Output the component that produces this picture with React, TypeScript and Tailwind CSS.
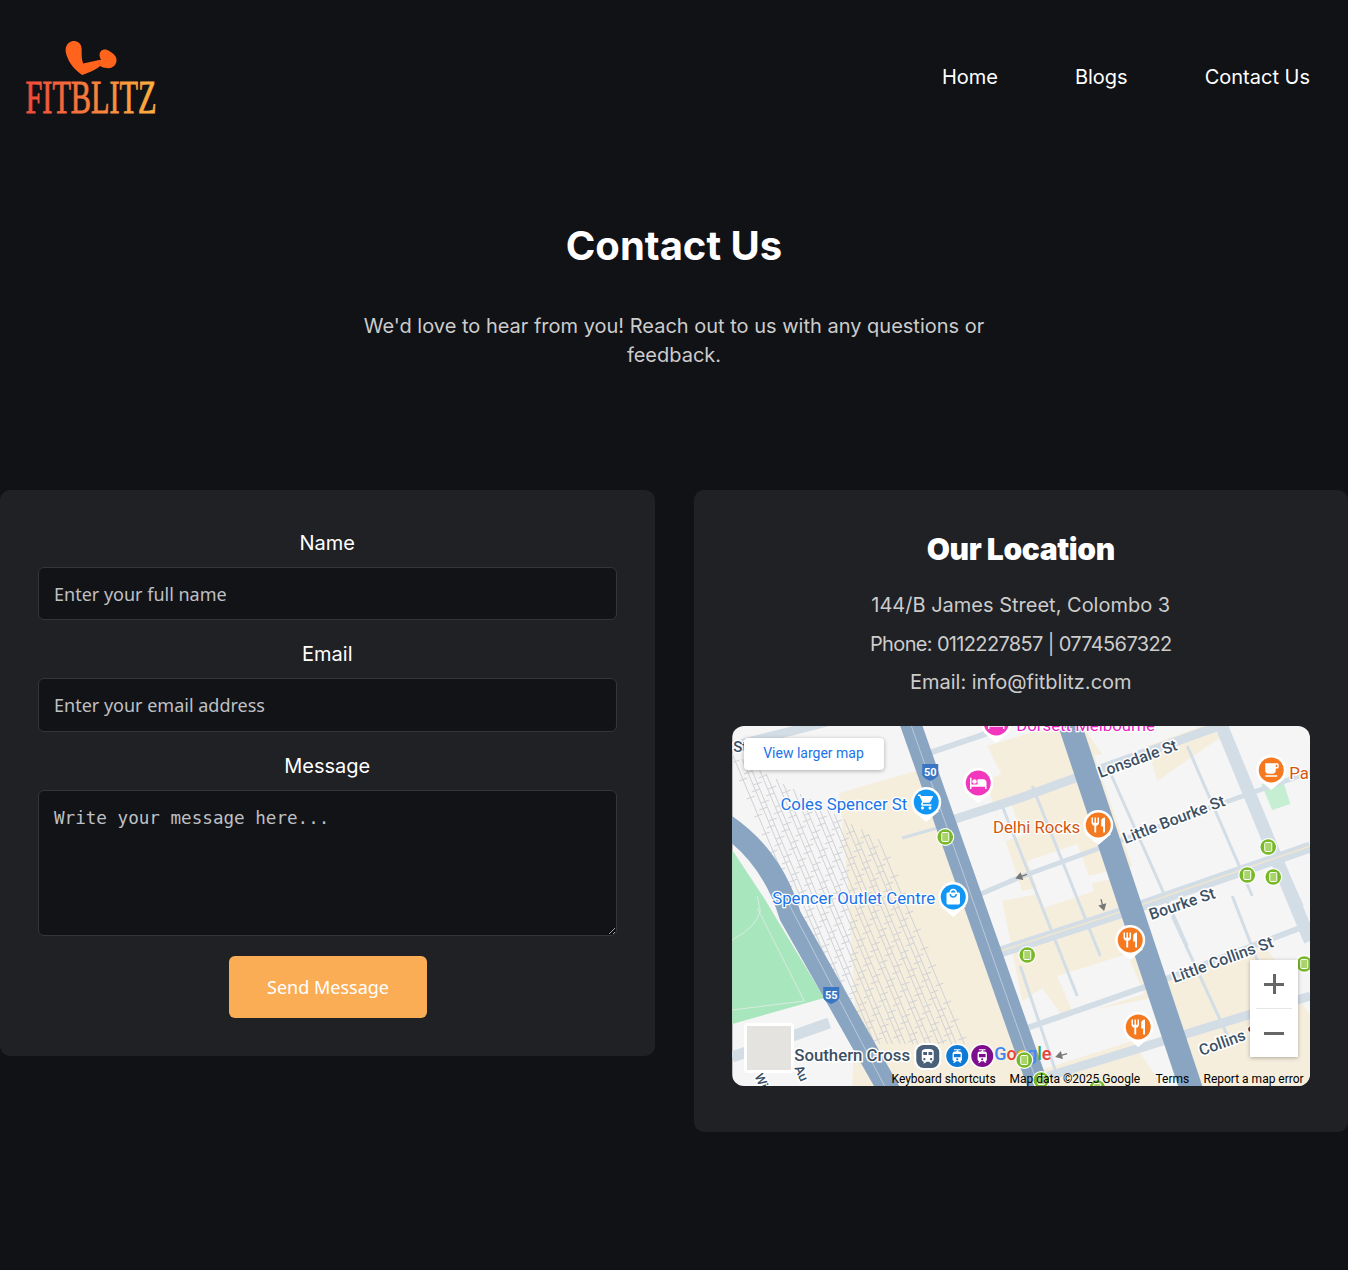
import { MdHotel, MdLocalCafe, MdLocalGroceryStore, MdLocalMall, MdRestaurant, MdTram, MdTrain } from 'react-icons/md';
import type { IconType } from 'react-icons';

const Logo = () => (
    <svg width="132" height="74" viewBox="0 0 132 74" className="overflow-visible">
        <defs>
            <linearGradient id="logoText" gradientUnits="userSpaceOnUse" x1="0" x2="131" y1="0" y2="0">
                <stop offset="0" stopColor="#f04a3a" />
                <stop offset="1" stopColor="#fdb23f" />
            </linearGradient>
        </defs>
        <path
            d="M39.7 7 C41 2 45 -0.5 49 0 C53 1 55 3 55.5 7 C56 12 55 17 57.3 22.5 L73 19 L75 19 C73 15 73 12 75 10 C77 8 81 8 83 10 C87 12 91 15 90.5 20 C90 25 85 28 81 27 C78 27 76 26 74 25 C70 29 62 32 56 34 C52 31 47 27 43 20 C41 16 39 11 39.7 7 Z"
            fill="#ff631c"
        />
        <text
            x="-0.5"
            y="72"
            fontSize="47"
            textLength="131"
            lengthAdjust="spacingAndGlyphs"
            fill="url(#logoText)"
            stroke="url(#logoText)"
            strokeWidth="0.9"
            className="font-['Liberation_Serif']"
        >
            FITBLITZ
        </text>
    </svg>
);

const Pin = ({ x, y, color, Icon, size = 18 }: { x: number; y: number; color: string; Icon: IconType; size?: number }) => (
    <g>
        <path d={`M${x - 13} ${y + 9} L${x} ${y + 20} L${x + 13} ${y + 9} Z`} fill="#fff" />
        <circle cx={x} cy={y} r="15" fill="#fff" />
        <circle cx={x} cy={y} r="12.5" fill={color} />
        <Icon x={x - size / 2} y={y - size / 2} size={size} color="#fff" />
    </g>
);

const Tram = ({ x, y }: { x: number; y: number }) => (
    <g>
        <circle cx={x} cy={y} r="9" fill="#fff" />
        <circle cx={x} cy={y} r="7.8" fill="#78b82a" />
        <rect x={x - 3.5} y={y - 4.5} width="7" height="9" rx="1" fill="#a9d46a" stroke="#fff" />
    </g>
);

const Shield = ({ x, y, label }: { x: number; y: number; label: string }) => (
    <g>
        <path d={`M${x - 8} ${y - 8} H${x + 8} V${y + 3} Q${x + 7} ${y + 6} ${x} ${y + 9} Q${x - 7} ${y + 6} ${x - 8} ${y + 3} Z`} fill="#3a75c4" />
        <text x={x} y={y + 4} textAnchor="middle" fontSize="11" fontWeight="700" fill="#fff">
            {label}
        </text>
    </g>
);

const Arrow = ({ x, y, r }: { x: number; y: number; r: number }) => (
    <path d="M-5 0 H1 M1 -3 L6 0 L1 3 Z" transform={`translate(${x} ${y}) rotate(${r})`} stroke="#777" strokeWidth="1.3" fill="#777" />
);

// rail yard next to Southern Cross
const rails = Array.from({ length: 18 }, (_, i) => {
    const x0 = i * 8.5 + (i % 2) * 1.5;
    const y0 = 28 + i * 5;
    const len = 290 - i * 5;
    let d = `M${x0} ${y0} L${x0 + len * 0.42} ${y0 + len}`;
    for (let t = 8 + (i % 3) * 6; t < len; t += 18) {
        const cx = x0 + t * 0.42;
        const cy = y0 + t;
        d += ` M${cx - 4} ${cy + 1} L${cx + 4} ${cy - 2}`;
    }
    return d;
});

const roadLabel = "fill-[#3c5064] font-['Roboto'] font-medium [paint-order:stroke] stroke-white stroke-[3px]";
const poiLabel = "font-['Roboto'] [paint-order:stroke] stroke-white stroke-[2.5px]";

const MapArt = () => (
    <svg viewBox="0 0 578 360" className="block h-full w-full" fontFamily="Roboto">
        <rect width="578" height="360" fill="#f5f5f5" />

        {/* built up blocks */}
        <g fill="#f6eedd">
            <path d="M107 67 L187 44 L305 360 L120 360 L123 290 L117 174 Z" />
            <path d="M253 54 L358 18 L400 140 L290 165 Z" />
            <path d="M270 175 L395 150 L430 270 L330 290 L310 262 L290 275 Z" />
            <path d="M420 262 L530 215 L578 290 L578 360 L450 360 Z" />
            <path d="M255 20 L320 0 L350 0 L370 28 L270 50 Z" />
            <path d="M415 20 L470 0 L490 10 L425 55 Z" />
            <path d="M305 345 L400 315 L430 360 L320 360 Z" />
        </g>
        <g fill="#f5f5f5">
            <path d="M295 135 L345 118 L362 165 L312 182 Z" />
            <path d="M325 250 L395 228 L412 268 L342 290 Z" />
            <path d="M455 200 L520 180 L535 215 L470 240 Z" />
            <path d="M262 80 L278 75 L290 110 L274 115 Z" />
        </g>

        {/* park */}
        <path d="M0 124 L33 174 L92 272 L0 298 Z" fill="#a8e6bd" />
        <path d="M529 58 L550 52 L558 78 L540 84 Z" fill="#c5eed3" />
        <g fill="none" stroke="#d8ebe0" strokeWidth="1">
            <path d="M0 214 Q25 200 28 185 L25 170" />
            <path d="M25 182 L72 275 L0 284" />
        </g>

        {/* rails */}
        <g fill="none" stroke="#cfd1d5" strokeWidth="1">
            {rails.map((d) => (
                <path key={d} d={d} />
            ))}
        </g>

        {/* streets */}
        <g fill="none" stroke="#d3dde6" strokeLinecap="butt">
            <path d="M220 94 L288 72 L495 -3" strokeWidth="9" />
            <path d="M197 27 L256 7" strokeWidth="6" />
            <path d="M170 112 L205 102" strokeWidth="3" />
            <path d="M225 178 L288 151 L505 72 L578 46" strokeWidth="5" />
            <path d="M250 232 L391 186 L578 121" strokeWidth="11" />
            <path d="M295 302 L418 259 L578 198" strokeWidth="6" />
            <path d="M300 355 L578 270" strokeWidth="9" />
            <path d="M488 -3 L578 215" strokeWidth="13" />
            <path d="M0 331 L97 297" strokeWidth="11" />
            <path d="M0 20 L95 -4" strokeWidth="9" />
            <path d="M375 40 L455 220" strokeWidth="3" />
            <path d="M455 20 L520 170" strokeWidth="3" />
            <path d="M520 70 L570 180" strokeWidth="3" />
            <path d="M270 80 L345 270" strokeWidth="3" />
            <path d="M300 60 L368 230" strokeWidth="3" />
            <path d="M440 190 L500 320" strokeWidth="3" />
            <path d="M500 170 L535 260" strokeWidth="3" />
            <path d="M288 240 L325 350" strokeWidth="3" />
        </g>
        <path d="M250 231 L391 185 L578 120" fill="none" stroke="#f0e6cf" strokeWidth="1.5" />

        {/* motorways */}
        <g fill="none" stroke="#8aa5c2">
            <path d="M-8 98 Q40 130 58 190 L160 370" strokeWidth="22" />
            <path d="M177 -6 L308 366" strokeWidth="21" />
            <path d="M336 -6 L460 366" strokeWidth="23" />
        </g>
        <path d="M177 -6 L308 366 M55 175 L155 365" fill="none" stroke="#c5d2e0" strokeWidth="0.8" />

        <Shield x={198} y={46} label="50" />
        <Shield x={99} y={269} label="55" />

        <Arrow x={290} y={150} r={160} />
        <Arrow x={370} y={178} r={75} />
        <Arrow x={330} y={329} r={165} />

        {/* street names */}
        <text x="368" y="52" fontSize="15.8" transform="rotate(-20 368 52)" className={roadLabel}>Lonsdale St</text>
        <text x="393" y="118" fontSize="15.8" transform="rotate(-21 393 118)" className={roadLabel}>Little Bourke St</text>
        <text x="419" y="194" fontSize="15.8" transform="rotate(-19 419 194)" className={roadLabel}>Bourke St</text>
        <text x="442" y="257" fontSize="15.8" transform="rotate(-20 442 257)" className={roadLabel}>Little Collins St</text>
        <text x="469" y="330" fontSize="15.8" transform="rotate(-20 469 330)" className={roadLabel}>Collins St</text>
        <text x="1" y="26" fontSize="15" className={roadLabel}>St</text>
        <text x="22" y="350" fontSize="13" transform="rotate(65 22 350)" className={roadLabel}>Wil</text>
        <text x="62" y="342" fontSize="13" transform="rotate(65 62 342)" className={roadLabel}>Au</text>

        {/* places */}
        <text x="284" y="5" fontSize="16.8" fill="#e81fc4" className={poiLabel}>Dorsett Melbourne</text>
        <Pin x={264} y={-3} color="#f236bd" Icon={MdHotel} />
        <Pin x={246} y={57} color="#f236bd" Icon={MdHotel} />

        <text x="175" y="84" fontSize="16.8" textAnchor="end" fill="#1a73e8" className={poiLabel}>Coles Spencer St</text>
        <Pin x={194} y={76} color="#1196f5" Icon={MdLocalGroceryStore} />

        <text x="348" y="107" fontSize="16.8" textAnchor="end" fill="#d2570f" className={poiLabel}>Delhi Rocks</text>
        <Pin x={366} y={99} color="#f5791f" Icon={MdRestaurant} />

        <text x="203" y="178" fontSize="16.8" textAnchor="end" fill="#1a73e8" className={poiLabel}>Spencer Outlet Centre</text>
        <Pin x={221} y={171} color="#1196f5" Icon={MdLocalMall} />

        <Pin x={539} y={44} color="#f5791f" Icon={MdLocalCafe} />
        <text x="557" y="53" fontSize="16.8" fill="#d2570f" className={poiLabel}>Pa</text>

        <Pin x={398} y={214} color="#f5791f" Icon={MdRestaurant} />
        <Pin x={406} y={301} color="#f5791f" Icon={MdRestaurant} />

        <Tram x={213} y={111} />
        <Tram x={536} y={121} />
        <Tram x={515} y={149} />
        <Tram x={541} y={151} />
        <Tram x={295} y={229} />
        <Tram x={572} y={238} />
        <Tram x={309} y={354} />
        <Tram x={365} y={362} />

        <text x="62" y="335" fontSize="16.8" className={roadLabel}>Southern Cross</text>
        <rect x="182" y="317" width="27" height="27" rx="9" fill="#fff" />
        <rect x="184" y="319" width="23" height="23" rx="7.5" fill="#4a6078" />
        <MdTrain x={186.5} y={321.5} size={18} color="#fff" />
        <circle cx="225" cy="330" r="12.5" fill="#fff" />
        <circle cx="225" cy="330" r="11" fill="#0f7ad6" />
        <MdTram x={217} y={322} size={16} color="#fff" />
        <circle cx="250" cy="330" r="12.5" fill="#fff" />
        <circle cx="250" cy="330" r="11" fill="#7d0f8f" />
        <MdTram x={242} y={322} size={16} color="#fff" />

        <text x="262" y="334" fontSize="18" fontWeight="500">
            <tspan fill="#4285f4">G</tspan>
            <tspan fill="#ea4335">o</tspan>
            <tspan fill="#fbbc05">o</tspan>
            <tspan fill="#4285f4">g</tspan>
            <tspan fill="#34a853">l</tspan>
            <tspan fill="#ea4335">e</tspan>
        </text>
        <Tram x={292} y={334} />
    </svg>
);

const fieldClass =
    "block w-full rounded-md border border-[#33353a] bg-[#121317] px-[15px] text-[#e5e5e5] outline-none placeholder:text-[#bfc0c4]";

const Field = ({ label, children }: { label: string; children: React.ReactNode }) => (
    <div className="flex flex-col">
        <label className="mb-[9px] text-center text-[20px] leading-[30px] text-white">{label}</label>
        {children}
    </div>
);

export default function App() {
    return (
        <div className="min-h-screen bg-[#111216] font-['Inter',sans-serif] text-white">
            <header className="flex items-center justify-between pl-[26px] pr-[38px] pt-[41px]">
                <Logo />
                <nav className="mb-[3px] flex gap-[77px] text-[20px] leading-[30px]">
                    <a href="#">Home</a>
                    <a href="#">Blogs</a>
                    <a href="#">Contact Us</a>
                </nav>
            </header>

            <section className="pt-[101px] text-center">
                <h1 className="text-[40px] font-bold leading-[60px]">Contact Us</h1>
                <p className="mx-auto mt-[36px] w-[640px] text-[20px] leading-[29px] text-[#cccccc]">
                    We'd love to hear from you! Reach out to us with any questions or feedback.
                </p>
            </section>

            <main className="mt-[120px] grid grid-cols-2 items-start gap-[39px]">
                <form className="flex flex-col gap-[19px] rounded-[10px] bg-[#202125] p-[38px]">
                    <Field label="Name">
                        <input placeholder="Enter your full name" className={`${fieldClass} h-[53px] font-['Noto_Sans'] text-[18px]`} />
                    </Field>
                    <Field label="Email">
                        <input placeholder="Enter your email address" className={`${fieldClass} h-[54px] font-['Noto_Sans'] text-[18px]`} />
                    </Field>
                    <Field label="Message">
                        <textarea
                            placeholder="Write your message here..."
                            className={`${fieldClass} h-[146px] pb-[15px] pt-[17px] font-['DejaVu_Sans_Mono'] text-[17.6px] leading-[21px]`}
                        />
                    </Field>
                    <button
                        type="button"
                        className="ml-[191px] mt-px h-[62px] w-[198px] rounded-md bg-[#fbad55] font-['Noto_Sans'] text-[18px] text-white"
                    >
                        Send Message
                    </button>
                </form>

                <div className="rounded-[10px] bg-[#202125] px-[38px] pb-[46px] pt-[37px]">
                    <h2 className="text-center text-[30px] font-black leading-[44px] tracking-[-0.4px]">Our Location</h2>
                    <div className="mt-[15px] text-center text-[20px] leading-[38.5px] text-[#cccccc]">
                        <p>144/B James Street, Colombo 3</p>
                        <p className="tracking-[-0.65px]">Phone: 0112227857 | 0774567322</p>
                        <p>Email: info@fitblitz.com</p>
                    </div>
                    <div className="relative mt-[24px] h-[360px] overflow-hidden rounded-xl">
                        <MapArt />
                        <a
                            href="#"
                            className="absolute left-[12px] top-[12px] flex h-[32px] w-[140px] items-center justify-center rounded-sm bg-white font-['Roboto'] text-[14px] text-[#1a73e8] shadow-[0_1px_4px_rgba(0,0,0,0.3)]"
                        >
                            View larger map
                        </a>
                        <div className="absolute bottom-[29px] right-[12px] flex h-[97px] w-[48px] flex-col items-center bg-white shadow-[0_1px_4px_rgba(0,0,0,0.3)]">
                            <span className="relative block h-[48px] w-full">
                                <span className="absolute left-[14px] top-[23px] h-[3px] w-[20px] bg-[#666]" />
                                <span className="absolute left-[22.5px] top-[14px] h-[20px] w-[3px] bg-[#666]" />
                            </span>
                            <span className="h-px w-[36px] bg-[#e6e6e6]" />
                            <span className="relative block h-[48px] w-full">
                                <span className="absolute left-[14px] top-[23px] h-[3px] w-[20px] bg-[#666]" />
                            </span>
                        </div>
                        <div className="absolute bottom-[13px] left-[12px] h-[50px] w-[50px] rounded-[3px] border-[3px] border-white bg-[#e5e3df]" />
                        <div className="absolute bottom-0 left-[160px] h-[14px] w-[412px] whitespace-nowrap font-['Roboto'] text-[12px] leading-[14px] text-black">
                            <span className="absolute left-0">Keyboard shortcuts</span>
                            <span className="absolute left-[118px]">Map data ©2025 Google</span>
                            <span className="absolute left-[264px]">Terms</span>
                            <span className="absolute left-[312px]">Report a map error</span>
                        </div>
                    </div>
                </div>
            </main>
        </div>
    );
}
